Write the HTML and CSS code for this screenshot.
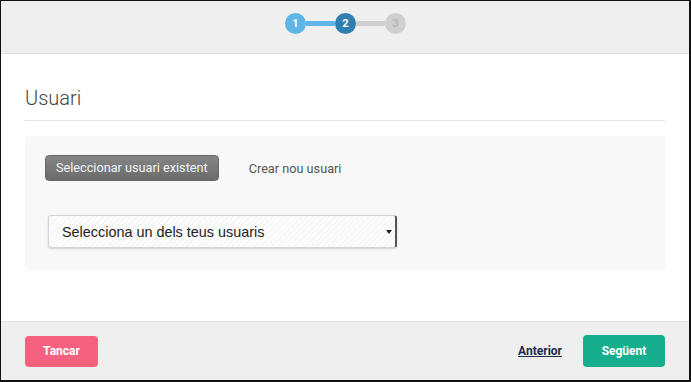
FILE: index.html
```html
<!DOCTYPE html>
<html lang="ca">
<head>
    <meta charset="UTF-8">
    <meta name="viewport" content="width=device-width, initial-scale=1.0">
    <title>Usuari</title>
    <link rel="stylesheet" href="styles.css">
</head>
<body>
    <div class="modal">
        <div class="modal-header">
            <div class="steps">
                <span class="step done">1</span>
                <span class="step-line done"></span>
                <span class="step current">2</span>
                <span class="step-line"></span>
                <span class="step">3</span>
            </div>
        </div>
        <div class="modal-body">
            <h2 class="title">Usuari</h2>
            <div class="panel">
                <div class="tabs">
                    <span class="tab active">Seleccionar usuari existent</span>
                    <span class="tab">Crear nou usuari</span>
                </div>
                <div class="select-box">
                    <span>Selecciona un dels teus usuaris</span>
                    <span class="arrow"></span>
                </div>
            </div>
        </div>
        <div class="modal-footer">
            <button class="btn btn-cancel">Tancar</button>
            <div class="nav">
                <a href="#" class="prev">Anterior</a>
                <button class="btn btn-next">Següent</button>
            </div>
        </div>
    </div>
</body>
</html>
```

FILE: styles.css
```css
* {
    box-sizing: border-box;
}
body {
    margin: 0;
    font-family: Roboto, 'Liberation Sans', sans-serif;
    background: #fff;
}
.modal {
    width: 691px;
    height: 382px;
    border-top: 1px solid #111;
    border-left: 1px solid #111;
    border-right: 2px solid #111;
    border-bottom: 2px solid #111;
    display: flex;
    flex-direction: column;
    background: #fff;
}
.modal-header {
    height: 53px;
    background: #efefef;
    border-bottom: 1px solid #e2e2e2;
    display: flex;
    justify-content: center;
    padding-top: 12px;
    padding-left: 1px;
}
.steps {
    display: flex;
    align-items: center;
    height: 21px;
}
.step {
    width: 21px;
    height: 21px;
    border-radius: 50%;
    background: #cfcfcf;
    color: #b8b8b8;
    font-size: 11px;
    font-weight: bold;
    display: flex;
    align-items: center;
    justify-content: center;
}
.step.done {
    background: #5db6e6;
    color: #fff;
}
.step.current {
    background: #2f7fb0;
    color: #fff;
}
.step-line {
    width: 29px;
    height: 5px;
    background: #cfcfcf;
}
.step-line.done {
    background: #5db6e6;
}
.modal-body {
    flex: 1;
    padding: 33px 24px 0 24px;
}
.title {
    margin: 0;
    font-weight: 300;
    font-size: 20px;
    color: #444;
    padding-bottom: 11px;
    border-bottom: 1px solid #e3e3e3;
    line-height: 22px;
}
.panel {
    margin-top: 15px;
    background: #f8f8f8;
    border-radius: 3px;
    padding: 19px 20px 23px 20px;
    height: 134px;
}
.tabs {
    display: flex;
    align-items: center;
    gap: 30px;
}
.tab {
    font-size: 12.7px;
    color: #555;
}
.tab.active {
    background: linear-gradient(#858585, #6b6b6b);
    color: #f4f4f4;
    border-radius: 4px;
    padding: 4px 10px 5px 10px;
    border: 1px solid #666;
}
.select-box {
    margin-top: 34px;
    margin-left: 3px;
    width: 349px;
    height: 33px;
    border: 1px solid #d4d4d4;
    border-right: 2px solid #555;
    border-radius: 3px;
    background: repeating-linear-gradient(135deg, #fff 0 2px, #f6f6f6 2px 4px);
    box-shadow: 0 1px 2px rgba(0,0,0,0.15);
    display: flex;
    align-items: center;
    justify-content: space-between;
    padding: 0 3px 0 13px;
    font-family: 'Liberation Sans', Arial, sans-serif;
    font-size: 14.4px;
    color: #222;
}
.arrow {
    width: 0;
    height: 0;
    border-left: 3px solid transparent;
    border-right: 3px solid transparent;
    border-top: 4px solid #222;
}
.modal-footer {
    height: 59px;
    background: #efefef;
    border-top: 1px solid #e2e2e2;
    display: flex;
    align-items: center;
    justify-content: space-between;
    padding: 0 24px;
}
.btn {
    border: none;
    border-radius: 4px;
    color: #fff;
    font-family: Roboto, 'Liberation Sans', sans-serif;
    font-weight: bold;
    font-size: 12px;
    height: 31px;
    cursor: pointer;
}
.btn-cancel {
    background: #f6617f;
    width: 73px;
}
.btn-next {
    background: #17ae8e;
    width: 82px;
    height: 32px;
}
.nav {
    display: flex;
    align-items: center;
    gap: 21px;
}
.prev {
    color: #1e2b4d;
    font-weight: bold;
    font-size: 12px;
}
```
